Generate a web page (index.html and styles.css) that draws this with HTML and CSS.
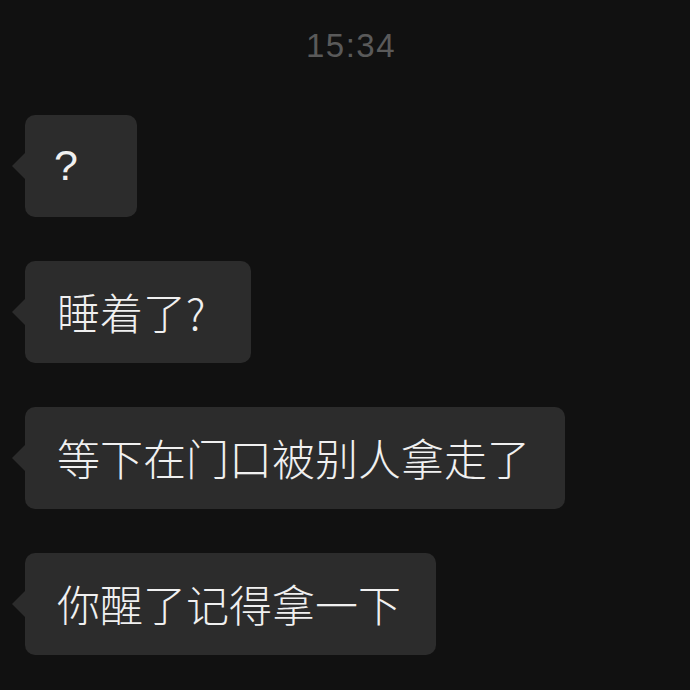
FILE: index.html
```html
<!DOCTYPE html>
<html lang="zh-CN">
<head>
<meta charset="utf-8">
<title>Chat</title>
<link rel="stylesheet" href="styles.css">
</head>
<body>
<div class="chat">
  <div class="time">15:34</div>
  <div class="messages">
    <div class="bubble b1">?</div>
    <div class="bubble b2">睡着了?</div>
    <div class="bubble">等下在门口被别人拿走了</div>
    <div class="bubble">你醒了记得拿一下</div>
  </div>
</div>
</body>
</html>
```
FILE: styles.css
```css
html, body {
  margin: 0;
  padding: 0;
  background: #111111;
}
.chat {
  width: 690px;
  height: 690px;
  overflow: hidden;
  box-sizing: border-box;
  padding: 26px 0 0 25px;
}
.time {
  font-family: "Liberation Sans", Arial, sans-serif;
  font-size: 33px;
  line-height: 40px;
  letter-spacing: 1.5px;
  color: #5a5a5a;
  text-align: center;
  margin-left: -25px;
  padding-left: 12px;
  margin-bottom: 49px;
}
.messages {
  display: flex;
  flex-direction: column;
  align-items: flex-start;
  gap: 44px;
}
.bubble {
  position: relative;
  background: #2c2c2c;
  color: #f0f0f0;
  border-radius: 10px;
  font-family: "Noto Sans CJK SC", "Noto Sans", sans-serif;
  font-weight: 300;
  font-size: 43px;
  line-height: 60px;
  padding: 20px 35px 22px 32px;
}
.bubble::before {
  content: "";
  position: absolute;
  left: -13px;
  top: 50%;
  margin-top: -13px;
  width: 0;
  height: 0;
  border-top: 13px solid transparent;
  border-bottom: 13px solid transparent;
  border-right: 13px solid #2c2c2c;
}
.b1 {
  font-family: "Liberation Sans", Arial, sans-serif;
  min-width: 48px;
  padding-left: 29px;
}
.b2 {
  padding-right: 46px;
}
```
